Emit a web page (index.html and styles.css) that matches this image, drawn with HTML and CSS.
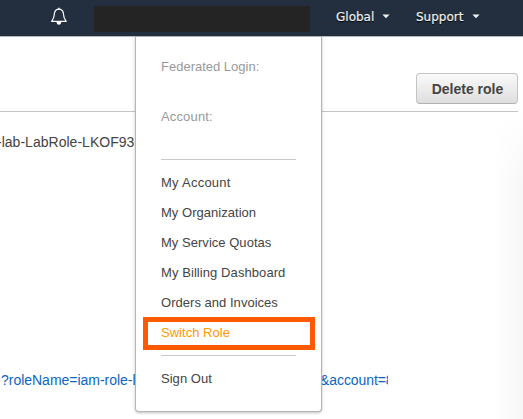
FILE: index.html
```html
<!DOCTYPE html>
<html lang="en">
<head>
<meta charset="utf-8">
<title>IAM role</title>
<link rel="stylesheet" href="styles.css">
</head>
<body>
<header class="topbar">
  <svg class="bell" width="18" height="19" viewBox="0 0 18 19" fill="none" stroke="#fff" stroke-width="1.2" stroke-linejoin="round" stroke-linecap="round">
    <path d="M7.4 2.4C4.8 3.2 4.4 5.2 4.3 7.6C4.2 10.8 3.3 12.2 1.6 14.3H16.2C14.5 12.2 13.6 10.8 13.5 7.6C13.4 5.2 13 3.2 10.4 2.4Q8.9 2 7.4 2.4Z"/>
    <path d="M8.9 1.1V2.2"/>
    <path d="M6.6 14.8a2.3 2.9 0 0 0 4.6 0z" fill="#fff" stroke="none"/>
  </svg>
  <div class="user"></div>
  <div class="nav global"><span>Global</span><svg width="8" height="5" viewBox="0 0 8 5"><path d="M.4.5H7.6L4 4.3Z" fill="#f2f2f2"/></svg></div>
  <div class="nav support"><span>Support</span><svg width="8" height="5" viewBox="0 0 8 5"><path d="M.4.5H7.6L4 4.3Z" fill="#f2f2f2"/></svg></div>
</header>
<main class="page">
  <div class="actions"><button class="delete">Delete role</button></div>
  <div class="arn">-lab-LabRole-LKOF93</div>
  <div class="link"><a class="link-start">?roleName=iam-role-l</a><a class="link-end">&amp;account=<span class="cut">8</span></a></div>
</main>
<nav class="menu">
  <div class="label">Federated Login:</div>
  <div class="label account">Account:</div>
  <hr>
  <a class="item wide">My Account</a>
  <a class="item">My Organization</a>
  <a class="item">My Service Quotas</a>
  <a class="item billing">My Billing Dashboard</a>
  <a class="item">Orders and Invoices</a>
  <a class="item active">Switch Role</a>
  <hr class="last">
  <a class="item">Sign Out</a>
</nav>
</body>
</html>
```
FILE: styles.css
```css
*, *::after { box-sizing: border-box; }
body {
  margin: 0;
  width: 523px;
  height: 419px;
  overflow: hidden;
  position: relative;
  background: #fff;
  color: #444;
  font-family: "Liberation Sans", Arial, sans-serif;
}
.topbar {
  height: 37px;
  display: flex;
  background: #232f3e;
  border-bottom: 1px solid #b5b8bc;
  padding-left: 50px;
}
.bell { margin-top: 7px; }
.user {
  width: 216px;
  height: 26px;
  margin: 6px 0 0 26px;
  background: #242424;
}
.nav {
  display: flex;
  align-items: center;
  justify-content: space-between;
  height: 33px;
  color: #eee;
  font: 12px "DejaVu Sans", Verdana, sans-serif;
  text-shadow: 0 1px 1px #000;
}
.nav span { -webkit-text-stroke: .2px #eee; }
.global { width: 54px; margin-left: 26px; }
.support { width: 64px; margin-left: 26px; }
.page {
  height: 382px;
  background:
    linear-gradient(to bottom, #fff 75px, transparent 150px),
    linear-gradient(to right, transparent 493px, #f7f7f7 523px);
}
.actions {
  display: flex;
  justify-content: flex-end;
  width: 518px;
  height: 75px;
  padding-top: 36px;
  border-bottom: 1px solid #c4c4c4;
}
.delete {
  width: 102px;
  height: 31px;
  padding: 0 0 0 1px;
  border: 1px solid #c4c4c4;
  border-bottom-color: #b2b2b2;
  border-radius: 4px;
  background: linear-gradient(#fafafa, #dedede);
  color: #444;
  font: bold 14px "Liberation Sans", Arial, sans-serif;
}
.arn, .link { font-size: 14px; line-height: 20px; white-space: nowrap; }
.arn { margin-top: 20px; margin-left: -3px; letter-spacing: .02px; }
.link { display: flex; margin-top: 218px; color: #0b65c3; }
.link-start { width: 320px; padding-left: 1px; letter-spacing: -.02px; }
.link-end { display: flex; letter-spacing: -.08px; }
.cut { width: 2px; overflow: hidden; }
.menu {
  position: absolute;
  left: 135px;
  top: 37px;
  width: 187px;
  height: 375px;
  padding: 14px 25px 0;
  background: #fff;
  border: 1px solid #b5b5b5;
  border-top: 0;
  border-radius: 0 0 4px 4px;
  box-shadow: 0 1px 3px rgba(0, 0, 0, .25);
  font-size: 13px;
  color: #444;
}
.label { height: 50px; line-height: 32px; color: #999; }
.account { letter-spacing: .15px; }
.menu hr { height: 1px; margin: 8px 0; border: 0; background: #c8c8c8; }
.menu .last { margin: 7px 0 8px; }
.item { display: block; height: 30px; line-height: 30px; letter-spacing: .03px; }
.wide { letter-spacing: .25px; }
.billing { letter-spacing: .08px; }
.active { position: relative; color: #ff9900; }
.active::after {
  content: "";
  position: absolute;
  left: -18px;
  top: -1px;
  width: 172px;
  height: 33px;
  border: 5px solid #ff5a00;
}
```
